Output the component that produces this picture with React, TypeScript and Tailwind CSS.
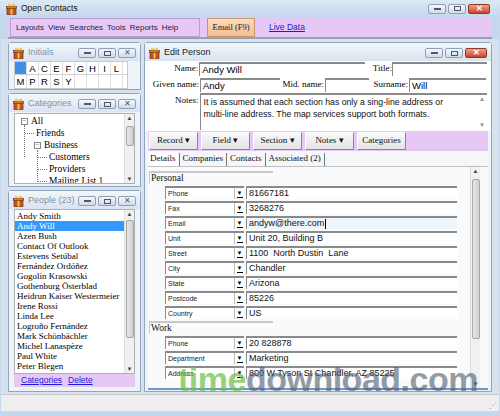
import React from 'react';

const serif = { fontFamily: '"Liberation Serif", "Times New Roman", serif' };
const sans = { fontFamily: '"Liberation Sans", Arial, sans-serif' };

const GiftIcon: React.FC = () => (
    <svg width="11" height="12" viewBox="0 0 11 12">
        <rect x="1" y="4" width="9" height="7.5" fill="#c8502a" stroke="#6b2a10" strokeWidth="0.7" />
        <rect x="4.5" y="4" width="2" height="7.5" fill="#f2c230" />
        <rect x="0.5" y="3.5" width="10" height="2" fill="#e0772f" stroke="#6b2a10" strokeWidth="0.6" />
        <path d="M5.5 3.5 C3 0 1.5 1.5 3 3.5 M5.5 3.5 C8 0 9.5 1.5 8 3.5" stroke="#f2c230" strokeWidth="1.2" fill="none" />
    </svg>
);

const WinButtons: React.FC<{ redClose?: boolean }> = ({ redClose }) => (
    <div className="flex gap-[2px]">
        <div className="w-[18px] h-[10px] rounded-[2px] border border-[#8ea0b8] bg-gradient-to-b from-[#f4f8fc] to-[#cfdceb] flex items-center justify-center">
            <div className="w-[7px] h-[2px] bg-[#556]" />
        </div>
        <div className="w-[18px] h-[10px] rounded-[2px] border border-[#8ea0b8] bg-gradient-to-b from-[#f4f8fc] to-[#cfdceb] flex items-center justify-center">
            <div className="w-[7px] h-[5px] border border-[#556]" />
        </div>
        {redClose ? (
            <div className="w-[22px] h-[10px] rounded-[2px] border border-[#8b3a2a] bg-gradient-to-b from-[#f0a08a] to-[#c9432a] flex items-center justify-center text-white text-[8px] leading-none font-bold" style={sans}>
                ✕
            </div>
        ) : (
            <div className="w-[18px] h-[10px] rounded-[2px] border border-[#8ea0b8] bg-gradient-to-b from-[#f4f8fc] to-[#cfdceb] flex items-center justify-center text-[#556] text-[8px] leading-none" style={sans}>
                ✕
            </div>
        )}
    </div>
);

const PanelHeader: React.FC<{ title: string; dim?: boolean; red?: boolean }> = ({ title, dim, red }) => (
    <div className="h-[18px] pt-[2px] flex items-center px-[4px] bg-gradient-to-b from-[#f3f7fb] to-[#d9e4f0] shrink-0">
        <GiftIcon />
        <span className={`ml-[4px] text-[9px] flex-1 whitespace-nowrap ${dim ? 'text-[#8592a3]' : 'text-[#1a1a1a]'}`} style={sans}>
            {title}
        </span>
        <WinButtons redClose={red} />
    </div>
);

const VScroll: React.FC<{ thumbTop: number; thumbHeight: number }> = ({ thumbTop, thumbHeight }) => (
    <div className="w-[10px] bg-[#f0f0f0] border-l border-[#e0e0e0] relative shrink-0 flex flex-col justify-between items-center">
        <span className="text-[6px] text-[#444] leading-[8px]">▲</span>
        <div
            className="absolute left-[1px] w-[8px] bg-gradient-to-r from-[#e6e6e6] to-[#cfcfcf] border border-[#a8a8a8] rounded-[2px]"
            style={{ top: thumbTop, height: thumbHeight }}
        />
        <span className="text-[6px] text-[#444] leading-[8px]">▼</span>
    </div>
);

const row1 = ['', 'A', 'C', 'E', 'F', 'G', 'H', 'I', 'L'];
const row2 = ['M', 'P', 'R', 'S', 'Y', '', '', '', ''];

const people = [
    'Andy Smith',
    'Andy Will',
    'Azen Bush',
    'Contact Of Outlook',
    'Estevens Setúbal',
    'Fernández Ordóñez',
    'Gogolin Krasowski',
    'Gothenburg Österblad',
    'Heidrun Kaiser Westermeier',
    'Irene Rossi',
    'Linda Lee',
    'Logroño Fernández',
    'Mark Schönbächler',
    'Michel Lanaspèze',
    'Paul White',
    'Peter Blegen',
    'Pavel Weiss',
];

const personal = [
    ['Phone', '81667181'],
    ['Fax', '3268276'],
    ['Email', 'andyw@there.com'],
    ['Unit', 'Unit 20, Building B'],
    ['Street', '1100  North Dustin  Lane'],
    ['City', 'Chandler'],
    ['State', 'Arizona'],
    ['Postcode', '85226'],
    ['Country', 'US'],
];

const work = [
    ['Phone', '20 828878'],
    ['Department', 'Marketing'],
    ['Address', '800 W Tyson St Chandler, AZ 85225'],
];

const FieldRow: React.FC<{ label: string; value: string; focused?: boolean }> = ({ label, value, focused }) => (
    <div className="h-[15px] flex items-start pl-[16px] gap-[2px]">
        <div className="w-[79px] h-[13px] flex border-t-2 border-l border-[#8a8a8a] bg-white">
            <span className="flex-1 text-[7px] leading-[11px] pl-[2px] text-[#222] whitespace-nowrap" style={sans}>{label}</span>
            <div className="w-[10px] h-[11px] border-l border-[#bbb] flex flex-col items-center justify-center">
                <span className="text-[6px] leading-[6px] text-black">▼</span>
                <div className="w-[6px] h-[1px] bg-black mt-[1px]" />
            </div>
        </div>
        <div className={`w-[211px] h-[13px] border-t-2 border-l border-[#8a8a8a] ${focused ? 'bg-[#eef6fb]' : 'bg-white'} flex items-center`}>
            <span className="text-[9px] leading-[11px] pl-[2px] text-[#111] whitespace-pre" style={sans}>
                {value}
                {focused && <span className="inline-block w-[1px] h-[10px] bg-black align-middle ml-[1px]" />}
            </span>
        </div>
    </div>
);

const SectionHead: React.FC<{ title: string; first?: boolean }> = ({ title, first }) => (
    <div className={`${first ? 'h-[19px] pt-[4px]' : 'h-[15px]'} flex`}>
        <div className="w-[124px] h-[13px] border-t-2 border-l border-[#c8c8c8] text-[9.5px] leading-[11px] pl-[1px] text-[#111]" style={serif}>
            {title}
        </div>
    </div>
);

const treeDash = 'w-[9px] h-[1px] border-t border-dotted border-[#777]';
const treeBox = 'w-[7px] h-[7px] border border-[#888] text-[7px] leading-[5px] text-center text-[#444] bg-white';

export default function App() {
    return (
        <div className="w-[500px] h-[416px] relative overflow-hidden bg-[#c4d8ed] flex flex-col">
            {/* title bar */}
            <div className="h-[17px] flex items-center px-[6px] bg-gradient-to-b from-[#dce9f6] to-[#c4d8ed] shrink-0">
                <GiftIcon />
                <span className="ml-[4px] text-[8.5px] text-[#111] flex-1" style={sans}>Open Contacts</span>
                <div className="mr-[4px]">
                    <WinButtons redClose />
                </div>
            </div>

            {/* menu bar */}
            <div className="mx-[8px] h-[22px] bg-[#e7c7f6] border-b-2 border-[#9aa0b0] flex items-center shrink-0">
                <div className="ml-[2px] w-[190px] h-[19px] pt-[2px] border border-[#b9a0cf] flex items-center gap-[4px] px-[5px] text-[8px] text-[#1d1d40] whitespace-nowrap" style={sans}>
                    <span>Layouts</span>
                    <span>View</span>
                    <span>Searches</span>
                    <span>Tools</span>
                    <span>Reports</span>
                    <span>Help</span>
                </div>
                <div className="ml-[7px] w-[48px] h-[19px] bg-gradient-to-b from-[#fadcc0] to-[#f2bf92] border border-[#c99569] flex items-center justify-center text-[8.5px] text-[#222] whitespace-nowrap" style={serif}>
                    Email (F9)
                </div>
                <span className="ml-[14px] text-[8.5px] text-[#1a1ae0] underline" style={sans}>Live Data</span>
            </div>

            {/* main */}
            <div className="flex-1 flex gap-[3px] px-[7px] pt-[3px] bg-[#d7e2ee] mx-[1px] min-h-0">
                {/* left column */}
                <div className="w-[133px] flex flex-col gap-[3px] shrink-0">
                    {/* initials */}
                    <div className="h-[48px] border border-[#8fa4bf] rounded-t-[3px] bg-[#eef3f8] flex flex-col shrink-0">
                        <PanelHeader title="Initials" dim />
                        <div className="mx-[5px] w-[114px] border border-[#c9c9c9] bg-white">
                            {[row1, row2].map((r, ri) => (
                                <div key={ri} className={`flex h-[13px] ${ri === 0 ? 'border-b border-[#d0d0d0]' : ''}`}>
                                    {r.map((c, ci) => (
                                        <div
                                            key={ci}
                                            className={`w-[12px] h-full border-r border-[#e0e0e0] text-[9.5px] leading-[13px] text-center text-black ${ri === 0 && ci === 0 ? 'bg-[#3d8fe8]' : ''}`}
                                            style={sans}
                                        >
                                            {c}
                                        </div>
                                    ))}
                                </div>
                            ))}
                        </div>
                    </div>

                    {/* categories */}
                    <div className="h-[94px] border border-[#8fa4bf] rounded-t-[3px] bg-[#eef3f8] flex flex-col shrink-0">
                        <PanelHeader title="Categories" dim />
                        <div className="mx-[5px] mt-[1px] h-[71px] border border-[#b0b0b0] bg-white flex overflow-hidden">
                            <div className="flex-1 relative text-[9.5px] leading-[12px] text-black pt-[1px] whitespace-nowrap" style={serif}>
                                <div className="absolute left-[9px] top-[11px] h-[32px] border-l border-dotted border-[#777]" />
                                <div className="absolute left-[22px] top-[36px] h-[36px] border-l border-dotted border-[#777]" />
                                <div className="relative flex items-center h-[12px] pl-[6px]">
                                    <span className={treeBox}>−</span>
                                    <span className="ml-[3px]">All</span>
                                </div>
                                <div className="relative flex items-center h-[12px] pl-[10px]">
                                    <span className={treeDash} />
                                    <span className="ml-[2px]">Friends</span>
                                </div>
                                <div className="relative flex items-center h-[12px] pl-[19px]">
                                    <span className={treeBox}>−</span>
                                    <span className="ml-[3px]">Business</span>
                                </div>
                                <div className="relative flex items-center h-[12px] pl-[23px]">
                                    <span className={treeDash} />
                                    <span className="ml-[2px]">Customers</span>
                                </div>
                                <div className="relative flex items-center h-[12px] pl-[23px]">
                                    <span className={treeDash} />
                                    <span className="ml-[2px]">Providers</span>
                                </div>
                                <div className="relative flex items-center h-[12px] pl-[23px]">
                                    <span className={treeDash} />
                                    <span className="ml-[2px]">Mailing List 1</span>
                                </div>
                            </div>
                            <VScroll thumbTop={12} thumbHeight={20} />
                        </div>
                    </div>

                    {/* people */}
                    <div className="flex-1 border border-[#8fa4bf] rounded-t-[3px] bg-[#eef3f8] flex flex-col min-h-0 mb-[2px]">
                        <PanelHeader title="People (23)" dim />
                        <div className="mx-[5px] h-[165px] border border-[#b0b0b0] bg-white flex overflow-hidden">
                            <div className="flex-1 text-[9px] leading-[10px] text-black pt-[1px] overflow-hidden" style={serif}>
                                {people.map((p, i) => (
                                    <div
                                        key={p}
                                        className={`h-[10px] pl-[2px] whitespace-nowrap ${i === 1 ? 'bg-[#3399ff] text-white' : ''}`}
                                    >
                                        {p}
                                    </div>
                                ))}
                            </div>
                            <VScroll thumbTop={10} thumbHeight={118} />
                        </div>
                        <div className="mx-[5px] h-[13px] bg-[#e7c7f6] flex items-center gap-[6px] pl-[7px] text-[8.5px] text-[#1a1ae0]" style={sans}>
                            <span className="underline">Categories</span>
                            <span className="underline">Delete</span>
                        </div>
                    </div>
                </div>

                {/* edit person */}
                <div className="flex-1 border border-[#8fa4bf] rounded-t-[3px] bg-[#eef3f8] flex flex-col mb-[2px] min-w-0">
                    <PanelHeader title="Edit Person" red />
                    <div className="flex flex-col px-[4px] bg-white">
                        {/* name row */}
                        <div className="h-[16px] flex items-center text-[9px] whitespace-nowrap" style={serif}>
                            <span className="w-[51px] text-right pr-[1px] text-black">Name:</span>
                            <div className="w-[168px] h-[14px] border-t-2 border-l border-[#8a8a8a] bg-white text-[9.5px] leading-[12px] pl-[2px]" style={sans}>Andy Will</div>
                            <span className="ml-[8px] w-[20px] text-black">Title:</span>
                            <div className="w-[96px] h-[14px] border-t-2 border-l border-[#8a8a8a] bg-white" />
                        </div>
                        <div className="h-[16px] flex items-center text-[9px] whitespace-nowrap" style={serif}>
                            <span className="w-[51px] text-right pr-[1px] text-black">Given name:</span>
                            <div className="w-[80px] h-[14px] border-t-2 border-l border-[#8a8a8a] bg-white text-[9.5px] leading-[12px] pl-[2px]" style={sans}>Andy</div>
                            <span className="w-[45px] text-right pr-[1px] text-black">Mid. name:</span>
                            <div className="w-[44px] h-[14px] border-t-2 border-l border-[#8a8a8a] bg-white" />
                            <span className="w-[40px] text-right pr-[1px] text-black">Surname:</span>
                            <div className="w-[77px] h-[14px] border-t-2 border-l border-[#8a8a8a] bg-white text-[9.5px] leading-[12px] pl-[2px]" style={sans}>Will</div>
                        </div>
                        <div className="h-[38px] flex items-start text-[9px]" style={serif}>
                            <span className="w-[51px] text-right pr-[1px] text-black pt-[1px]">Notes:</span>
                            <div className="w-[290px] h-[37px] border-t-2 border-l border-[#8a8a8a] bg-white flex">
                                <p className="flex-1 text-[8.7px] leading-[12px] pl-[3px] pt-[1px] text-[#111]" style={sans}>
                                    It is assumed that each section has only a sing-line address or <span className="whitespace-nowrap">multi-line</span> address. The map services support both formats.
                                </p>
                                <div className="w-[10px] flex flex-col justify-between items-center text-[6px] text-[#888]">
                                    <span>▲</span>
                                    <span>▼</span>
                                </div>
                            </div>
                        </div>
                    </div>

                    {/* toolbar */}
                    <div className="mx-[3px] h-[20px] bg-[#e5c8f6] flex items-center gap-[3px] pl-[1px] text-[9px] text-[#111]" style={serif}>
                        {['Record ▾', 'Field ▾', 'Section ▾', 'Notes ▾', 'Categories'].map((b) => (
                            <div key={b} className="w-[49px] h-[18px] bg-gradient-to-b from-[#f8f8f8] to-[#e4e4e4] border border-t-white border-l-white border-r-[#888] border-b-[#888] flex items-center justify-center whitespace-nowrap">
                                {b}
                            </div>
                        ))}
                    </div>

                    {/* tabs */}
                    <div className="mx-[3px] h-[15px] flex items-end text-[9px] text-[#111] bg-[#f4f6f8] whitespace-nowrap" style={serif}>
                        <span className="px-[2px] h-[14px] leading-[13px] bg-white">Details</span>
                        <span className="w-[1px] h-[13px] bg-[#777] mx-[1px]" />
                        <span className="px-[2px] h-[14px] leading-[13px]">Companies</span>
                        <span className="w-[1px] h-[13px] bg-[#777] mx-[1px]" />
                        <span className="px-[2px] h-[14px] leading-[13px]">Contacts</span>
                        <span className="w-[1px] h-[13px] bg-[#777] mx-[1px]" />
                        <span className="px-[2px] h-[14px] leading-[13px]">Associated (2)</span>
                        <span className="w-[1px] h-[13px] bg-[#777] mx-[1px]" />
                    </div>

                    {/* details */}
                    <div className="mx-[3px] flex-1 flex min-h-0 border-t border-[#c0c0c0] bg-[#f9fafb] overflow-hidden">
                        <div className="flex-1 flex flex-col pl-[1px] overflow-hidden">
                            <SectionHead title="Personal" first />
                            {personal.map(([l, v]) => (
                                <FieldRow key={l} label={l} value={v} focused={l === 'Email'} />
                            ))}
                            <SectionHead title="Work" />
                            {work.map(([l, v]) => (
                                <FieldRow key={l} label={l} value={v} />
                            ))}
                        </div>
                        <div className="w-[12px] mr-[6px] flex">
                            <VScroll thumbTop={12} thumbHeight={160} />
                        </div>
                    </div>
                    <div className="h-[3px] border-t-2 border-[#6f98c8] mx-[3px]" />
                </div>
            </div>

            {/* status bar */}
            <div className="h-[17px] mx-[1px] bg-[#eeeeee] border-t border-[#c8c8c8] shrink-0 relative">
                <div className="absolute right-[2px] bottom-[2px] text-[8px] text-[#999] leading-none">⋰</div>
            </div>
            <div className="h-[5px] bg-[#c4d8ed] shrink-0" />

            {/* watermark */}
            <div className="absolute left-[178px] top-[362px] text-[34px] font-bold leading-none tracking-[-0.5px] pointer-events-none whitespace-nowrap" style={sans}>
                <span className="text-[#6cc04a] opacity-70">time</span>
                <span className="text-[#4d5d6e] opacity-60">download.com</span>
            </div>
        </div>
    );
}
